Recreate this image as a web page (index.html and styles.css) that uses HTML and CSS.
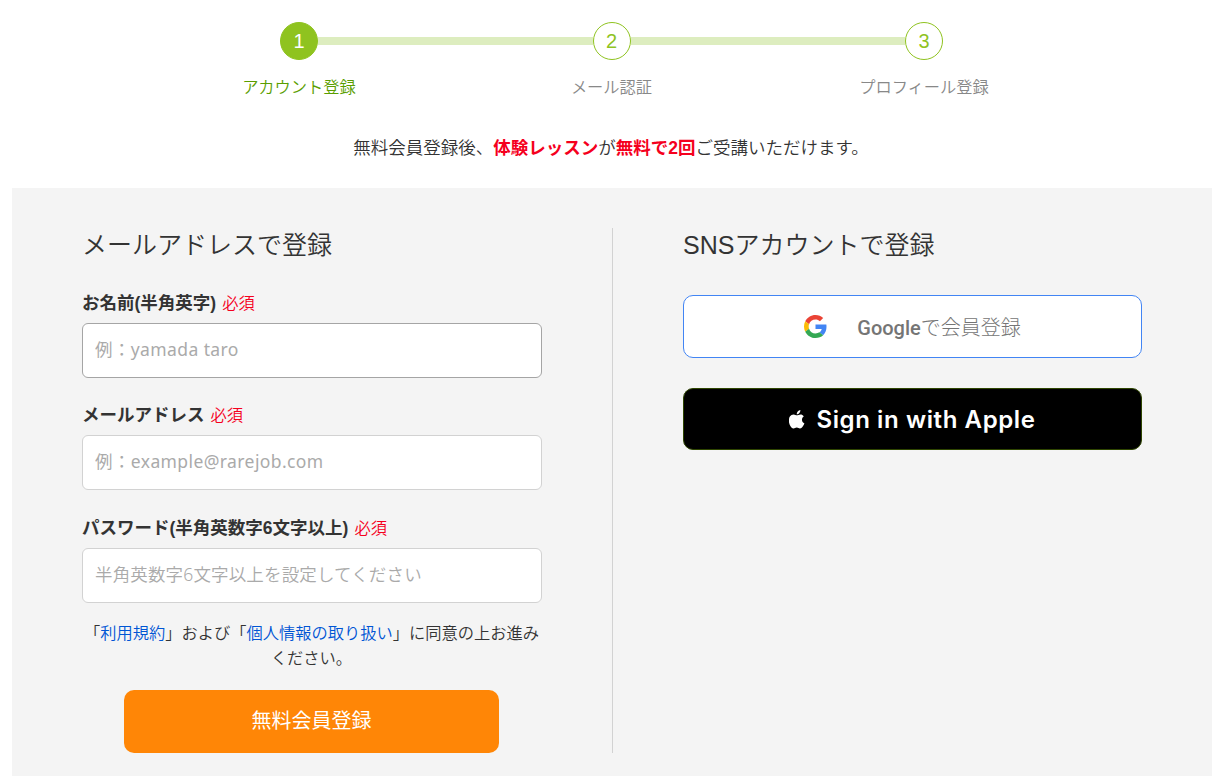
FILE: index.html
```html
<!DOCTYPE html>
<html lang="ja">
<head>
    <meta charset="UTF-8">
    <title>無料会員登録</title>
    <link rel="stylesheet" href="styles.css">
</head>
<body>
    <div class="container">
        <ol class="steps">
            <li class="step active">
                <div class="step-bar"><span class="step-number">1</span></div>
                <p class="step-label">アカウント登録</p>
            </li>
            <li class="step">
                <div class="step-bar"><span class="step-number">2</span></div>
                <p class="step-label">メール認証</p>
            </li>
            <li class="step">
                <div class="step-bar"><span class="step-number">3</span></div>
                <p class="step-label">プロフィール登録</p>
            </li>
        </ol>
        <p class="lead">無料会員登録後、<strong>体験レッスン</strong>が<strong>無料で2回</strong>ご受講いただけます。</p>

        <div class="register">
            <form class="column mail-column">
                <h2>メールアドレスで登録</h2>
                <div class="field">
                    <label for="name">お名前(半角英字)<span class="required">必須</span></label>
                    <input class="current" type="text" id="name" placeholder="例：yamada taro">
                </div>
                <div class="field">
                    <label for="email">メールアドレス<span class="required">必須</span></label>
                    <input type="email" id="email" placeholder="例：example@rarejob.com">
                </div>
                <div class="field">
                    <label for="password">パスワード(半角英数字6文字以上)<span class="required">必須</span></label>
                    <input class="password" type="password" id="password" placeholder="半角英数字6文字以上を設定してください">
                </div>
                <p class="terms">「<a href="#">利用規約</a>」および「<a href="#">個人情報の取り扱い</a>」に同意の上お進みください。</p>
                <button type="submit" class="submit-button">無料会員登録</button>
            </form>

            <div class="column sns-column">
                <h2>SNSアカウントで登録</h2>
                <a href="#" class="sns-button google">
                    <svg class="google-icon" viewBox="0 0 48 48">
                        <path fill="#EA4335" d="M24 9.5c3.54 0 6.71 1.22 9.21 3.6l6.85-6.85C35.9 2.38 30.47 0 24 0 14.62 0 6.51 5.38 2.56 13.22l7.98 6.19C12.43 13.72 17.74 9.5 24 9.5z"/>
                        <path fill="#4285F4" d="M46.98 24.55c0-1.57-.15-3.09-.38-4.55H24v9.02h12.94c-.58 2.96-2.26 5.48-4.78 7.18l7.73 6c4.51-4.18 7.09-10.36 7.09-17.65z"/>
                        <path fill="#FBBC05" d="M10.53 28.59c-.48-1.45-.76-2.99-.76-4.59s.27-3.14.76-4.59l-7.98-6.19C.92 16.46 0 20.12 0 24c0 3.88.92 7.54 2.56 10.78l7.97-6.19z"/>
                        <path fill="#34A853" d="M24 48c6.48 0 11.93-2.13 15.89-5.81l-7.73-6c-2.15 1.45-4.92 2.3-8.16 2.3-6.26 0-11.57-4.22-13.47-9.91l-7.98 6.19C6.51 42.62 14.62 48 24 48z"/>
                    </svg>
                    <span><span class="brand">Google</span>で会員登録</span>
                </a>
                <a href="#" class="sns-button apple">
                    <svg class="apple-icon" viewBox="0 0 17 20" preserveAspectRatio="none">
                        <path fill="#fff" d="M12.1 0c.1 1.2-.35 2.3-1.05 3.15C10.3 4 9.3 4.6 8.2 4.5 8.1 3.4 8.6 2.3 9.25 1.55 9.95.7 11.1.1 12.1 0zM15.7 6.85c-1.2.75-1.9 1.9-1.9 3.35 0 1.7 1 3.1 2.55 3.7-.3.95-.8 1.95-1.45 2.9-.9 1.3-1.8 2.6-3.25 2.6-1.4 0-1.8-.85-3.4-.85s-2.1.85-3.45.9c-1.4.05-2.45-1.4-3.35-2.7C-.35 14.1-.75 9.5.95 6.95 1.85 5.6 3.35 4.7 4.9 4.7c1.45 0 2.5.9 3.55.9 1 0 2.25-1 4.1-.9.75.05 2.2.35 3.15 2.15z"/>
                    </svg>
                    <span>Sign in with Apple</span>
                </a>
            </div>
        </div>
    </div>
</body>
</html>
```

FILE: styles.css
```css
* {
    box-sizing: border-box;
}
body {
    margin: 0;
    color: #333;
    font-family: "Liberation Sans", "Noto Sans CJK JP", sans-serif;
    font-weight: 350;
    font-size: 17.5px;
}
h2, p, ol {
    margin: 0;
    padding: 0;
}
a {
    color: #0055d4;
    text-decoration: none;
}
.container {
    width: 1200px;
    margin-left: 12px;
}
.steps {
    display: flex;
    justify-content: center;
    padding-top: 22px;
    padding-right: 1px;
    list-style: none;
}
.step {
    width: 312.5px;
    text-align: center;
}
.step-bar {
    display: flex;
    align-items: center;
}
.step-bar::before,
.step-bar::after {
    content: "";
    flex: 1;
    height: 8px;
    background-color: #ddedbf;
}
.step:first-child .step-bar::before,
.step:last-child .step-bar::after {
    background-color: transparent;
}
.step-number {
    width: 38px;
    height: 38px;
    border: 1px solid #8fc31f;
    border-radius: 50%;
    color: #8fc31f;
    font-size: 20px;
    font-weight: 400;
    line-height: 37px;
}
.step-label {
    margin-top: 15px;
    color: #888;
    font-size: 16.25px;
    line-height: 24px;
}
.active .step-number {
    background-color: #8fc31f;
    color: #fff;
}
.active .step-label {
    color: #5a9e00;
}
.lead {
    margin: 36px 0 26px;
    padding-right: 2px;
    line-height: 27px;
    text-align: center;
}
.lead strong {
    color: #f5001d;
    font-weight: 700;
}
.register {
    display: flex;
    height: 588px;
    padding: 40px 0 23px;
    background-color: #f4f4f4;
}
.column {
    width: 600px;
    height: 525px;
    padding: 0 70px;
}
.sns-column {
    border-left: 1px solid #d2d2d2;
}
h2 {
    margin-bottom: 32px;
    font-size: 25px;
    font-weight: 350;
    line-height: 35px;
}
.field {
    height: 112.3px;
    margin-top: -5px;
    margin-bottom: 5px;
}
label {
    display: block;
    height: 33px;
    font-weight: 700;
    line-height: 26px;
}
.required {
    margin-left: 6px;
    color: #f5001d;
    font-size: 16.25px;
    font-weight: 350;
}
input {
    display: block;
    width: 460px;
    height: 55px;
    padding: 0 12px 3px;
    border: 1px solid #d2d2d2;
    border-radius: 6px;
    background-color: #fff;
    font-family: "Noto Sans", "Noto Sans CJK JP", sans-serif;
    font-size: 17.5px;
    font-weight: 400;
    letter-spacing: 0.4px;
}
input.current {
    border-color: #a5a5a5;
}
input.password {
    font-weight: 350;
    letter-spacing: 0.15px;
}
input::placeholder {
    color: #aaa;
}
.terms {
    margin-top: -11px;
    padding-right: 1px;
    font-size: 16.25px;
    line-height: 25px;
    text-align: center;
}
.submit-button {
    display: block;
    width: 375px;
    height: 63px;
    margin: 19px 0 0 42px;
    padding: 0 0 4px;
    border: none;
    border-radius: 10px;
    background-color: #ff8606;
    color: #fff;
    font-family: inherit;
    font-size: 20px;
    cursor: pointer;
}
.sns-button {
    display: flex;
    align-items: center;
    justify-content: center;
    width: 459px;
    height: 63px;
    border-radius: 10px;
}
.google {
    padding-bottom: 1px;
    border: 1px solid #4285f4;
    background-color: #fff;
    color: #757575;
    font-family: Roboto, "Noto Sans CJK JP", sans-serif;
    font-size: 20px;
    font-weight: 300;
    gap: 30px;
}
.google .brand {
    font-weight: 500;
}
.google-icon {
    width: 23px;
    height: 23px;
}
.apple {
    height: 62px;
    margin-top: 30px;
    border: 1px solid #2e4500;
    background-color: #000;
    color: #fff;
    font-family: Inter, sans-serif;
    font-size: 24px;
    font-weight: 600;
    letter-spacing: 0.6px;
    gap: 11px;
}
.apple-icon {
    width: 16px;
    height: 19px;
}
```
